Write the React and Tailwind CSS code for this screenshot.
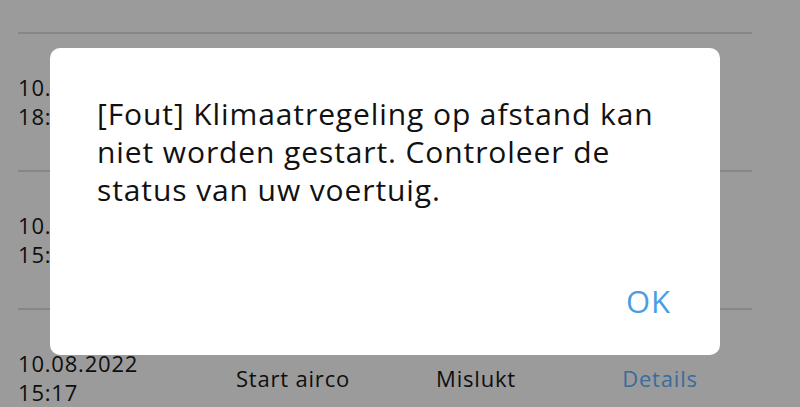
export default function App() {
  const rows = [
    { d: "10.08.2022", t: "18:02", a: "Start airco", s: "Mislukt" },
    { d: "10.08.2022", t: "15:20", a: "Start airco", s: "Mislukt" },
    { d: "10.08.2022", t: "15:17", a: "Start airco", s: "Mislukt" },
  ];
  return (
    <div
      className="relative w-[800px] h-[407px] overflow-hidden bg-[#9b9b9b]"
      style={{ fontFamily: "'Open Sans', Lato, sans-serif" }}
    >
      <div className="pt-[32px] ml-[18px] w-[734px]">
        {rows.map((r, i) => (
          <div key={i} className="border-t-2 border-[#878787] h-[138px] flex items-center text-[22px] leading-[29px] tracking-[0.8px] text-[#0e0e0e]">
            <div className="w-[190px]">
              <div>{r.d}</div>
              <div>{r.t}</div>
            </div>
            <div className="w-[170px] text-center">{r.a}</div>
            <div className="w-[196px] text-center">{r.s}</div>
            <div className="w-[172px] text-center text-[#3a6c9c]">Details</div>
          </div>
        ))}
      </div>
      <div className="absolute left-[50px] top-[48px] w-[670px] h-[307px] bg-white rounded-[10px] flex flex-col">
        <div className="pt-[47px] pl-[47px] pr-[10px] text-[30px] leading-[38px] tracking-[0.9px] text-[#111111]">
          [Fout] Klimaatregeling op afstand kan
          <br />
          niet worden gestart. Controleer de
          <br />
          status van uw voertuig.
        </div>
        <div className="flex-1" />
        <div className="flex justify-end pr-[49px] pb-[37px]">
          <span className="text-[31px] leading-[34px] tracking-[1px] text-[#4b9de2]">OK</span>
        </div>
      </div>
    </div>
  );
}
